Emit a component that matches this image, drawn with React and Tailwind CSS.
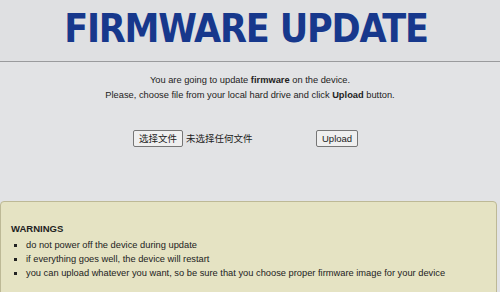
import React from 'react'

const App = () => {
  return (
    <div className="w-[500px] h-[292px] overflow-hidden bg-[#e2e3e5] font-['Liberation_Sans',Arial,sans-serif] text-[#222]">
      <div className="h-[62px] flex items-center justify-center border-b border-[#9a9b9d] bg-[#dfe0e2]">
        <h1 className="font-['DejaVu_Sans_Condensed','DejaVu_Sans',Verdana,sans-serif] font-bold text-[39px] leading-none text-[#17388c] tracking-[-1.2px] pb-[4px] pr-[8px]">
          FIRMWARE UPDATE
        </h1>
      </div>
      <div className="pt-[11px] text-center text-[9.3px] leading-[15px]">
        <p>You are going to update <b>firmware</b> on the device.</p>
        <p>Please, choose file from your local hard drive and click <b>Upload</b> button.</p>
      </div>
      <div className="flex items-center mt-[27px] pl-[133px] text-[9.5px]">
        <div className="flex items-center w-[183px]">
          <button className="px-[5px] h-[17px] border border-[#767676] rounded-[2px] bg-[#efefef] text-[9.5px] font-['Noto_Sans_CJK_SC',sans-serif] leading-none">
            选择文件
          </button>
          <span className="ml-[3px] font-['Noto_Sans_CJK_SC',sans-serif]">未选择任何文件</span>
        </div>
        <button className="px-[5px] h-[17px] border border-[#767676] rounded-[2px] bg-[#efefef] text-[9.5px] leading-none">
          Upload
        </button>
      </div>
      <div className="mt-[54px] mr-[3px] h-[120px] rounded-[4px] border border-[#bdb996] bg-[#e5e3c3] px-[10px] pt-[20px] text-[9.3px]">
        <h2 className="font-bold text-[9.5px] leading-[14px]">WARNINGS</h2>
        <ul className="mt-[2px] list-[square] pl-[15px] leading-[14px]">
          <li>do not power off the device during update</li>
          <li>if everything goes well, the device will restart</li>
          <li>you can upload whatever you want, so be sure that you choose proper firmware image for your device</li>
        </ul>
      </div>
    </div>
  )
}

export default App
